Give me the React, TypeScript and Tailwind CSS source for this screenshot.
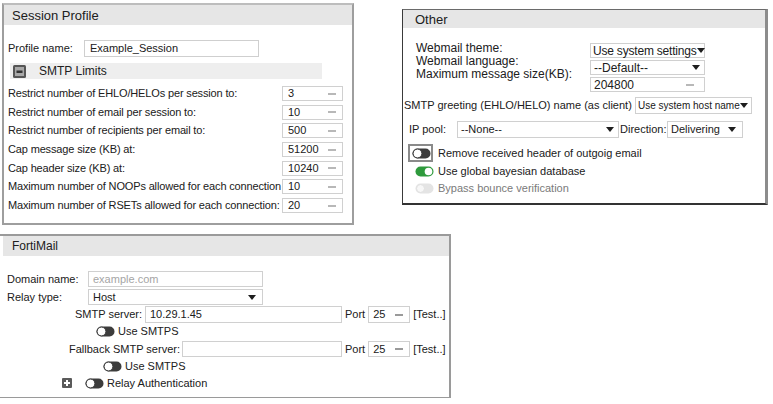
import React from "react";

const Arrow = () => (
  <svg width="8" height="5" viewBox="0 0 8 5" className="shrink-0">
    <path d="M0 0H8L4 5Z" fill="#1e1e1e" />
  </svg>
);

const Dash = () => <span className="ml-auto mr-[6px] h-[2px] w-[8px] shrink-0 bg-[#b8b8b8]" />;

const ToggleOff = () => (
  <svg width="19" height="11" viewBox="0 0 19 11" className="shrink-0">
    <rect x="0.5" y="0.5" width="18" height="10" rx="5" fill="#3c3c3c" />
    <circle cx="5.5" cy="5.5" r="4.4" fill="#fff" stroke="#3c3c3c" strokeWidth="1" />
  </svg>
);

const ToggleOn = () => (
  <svg width="19" height="11" viewBox="0 0 19 11" className="shrink-0">
    <rect x="0.5" y="0.5" width="18" height="10" rx="5" fill="#2e9a3c" />
    <circle cx="13.5" cy="5.5" r="3.8" fill="#fff" />
  </svg>
);

const ToggleFaint = () => (
  <svg width="19" height="11" viewBox="0 0 19 11" className="shrink-0">
    <rect x="0.5" y="0.5" width="18" height="10" rx="5" fill="#e4e4e4" />
    <circle cx="5.5" cy="5.5" r="4" fill="#f7f7f7" stroke="#e0e0e0" strokeWidth="1" />
  </svg>
);

const CollapseIcon = () => (
  <svg width="13" height="13" viewBox="0 0 13 13" className="shrink-0">
    <rect x="0" y="0" width="13" height="13" rx="1.5" fill="#555" />
    <rect x="2" y="2" width="9" height="9" fill="#a8a8a8" />
    <rect x="3.5" y="5.5" width="6" height="2.5" fill="#333" />
  </svg>
);

const PlusIcon = () => (
  <svg width="10" height="10" viewBox="0 0 10 10" className="shrink-0">
    <rect x="0" y="0" width="10" height="10" rx="1" fill="#5a5a5a" />
    <rect x="4" y="2" width="2" height="6" fill="#fff" />
    <rect x="2" y="4" width="6" height="2" fill="#fff" />
  </svg>
);

const limits: [string, string][] = [
  ["Restrict number of EHLO/HELOs per session to:", "3"],
  ["Restrict number of email per session to:", "10"],
  ["Restrict number of recipients per email to:", "500"],
  ["Cap message size (KB) at:", "51200"],
  ["Cap header size (KB) at:", "10240"],
  ["Maximum number of NOOPs allowed for each connection", "10"],
  ["Maximum number of RSETs allowed for each connection:", "20"],
];

function SessionProfile() {
  return (
    <div className="w-[352px] h-[222px] border-2 border-[#9e9e9e] border-t-[#bdbdbd] bg-white shrink-0">
      <div className="h-[20px] bg-[#e6e6e6] flex items-center pl-[8px] text-[13px]">Session Profile</div>
      <div className="mt-[15px] flex items-center h-[17px]">
        <div className="w-[80px] pl-[4px] whitespace-nowrap">Profile name:</div>
        <div className="h-[17px] w-[175px] border border-[#cfcfcf] flex items-center pl-[5px]">Example_Session</div>
      </div>
      <div className="mt-[6px] ml-[6px] w-[312px] h-[16px] bg-[#eeeeee] flex items-center">
        <span className="ml-[3px] flex">
          <CollapseIcon />
        </span>
        <span className="ml-[13px] text-[12px]">SMTP Limits</span>
      </div>
      <div className="mt-[7px]">
        {limits.map(([label, value]) => (
          <div key={label} className="flex items-center h-[15px] mb-[3.7px]">
            <div className="w-[278px] pl-[4px] whitespace-nowrap tracking-[-0.15px]">{label}</div>
            <div className="h-[15px] w-[61px] border border-[#d0d0d0] flex items-center pl-[5px]">
              <span>{value}</span>
              <Dash />
            </div>
          </div>
        ))}
      </div>
    </div>
  );
}

function Other() {
  return (
    <div className="ml-[48px] mt-[6px] w-[366px] h-[196px] border-l border-t border-r-[3px] border-b-2 border-l-[#3a3a3a] border-t-[#6a6a6a] border-r-[#8c8c8c] border-b-[#333] bg-white shrink-0">
      <div className="h-[18px] bg-[#e6e6e6] flex items-center pl-[12px] text-[13px]">Other</div>
      <div className="mt-[15px] flex items-start text-[12px]">
        <div className="w-[187px] pl-[13px] -mt-[1px] leading-[13px] whitespace-nowrap">
          <div>Webmail theme:</div>
          <div>Webmail language:</div>
          <div>Maximum message size(KB):</div>
        </div>
        <div className="flex flex-col gap-[2px]">
          <div className="w-[115px] h-[15px] border border-[#d0d0d0] flex items-center pl-[2px] pr-[2px] justify-between whitespace-nowrap tracking-[-0.2px]">
            <span>Use system settings</span>
            <Arrow />
          </div>
          <div className="w-[115px] h-[15px] border border-[#d0d0d0] flex items-center pl-[3px] pr-[4px] justify-between">
            <span>--Default--</span>
            <Arrow />
          </div>
          <div className="w-[115px] h-[15px] border border-[#d0d0d0] flex items-center pl-[3px]">
            <span>204800</span>
            <span className="ml-auto mr-[10px] h-[2px] w-[8px] bg-[#b8b8b8]" />
          </div>
        </div>
      </div>
      <div className="mt-[5px] flex items-center h-[17px]">
        <div className="w-[232px] pl-[1px] whitespace-nowrap">SMTP greeting (EHLO/HELO) name (as client)</div>
        <div className="w-[117px] h-[17px] border border-[#d0d0d0] flex items-center pl-[2px] pr-[3px] justify-between text-[10px] whitespace-nowrap">
          <span>Use system host name</span>
          <Arrow />
        </div>
      </div>
      <div className="mt-[7px] flex items-center h-[17px]">
        <div className="w-[54px] pl-[6px] whitespace-nowrap">IP pool:</div>
        <div className="w-[162px] h-[17px] border border-[#d0d0d0] flex items-center pl-[3px] pr-[4px] justify-between">
          <span>--None--</span>
          <Arrow />
        </div>
        <div className="ml-[1px] w-[47px] whitespace-nowrap">Direction:</div>
        <div className="w-[76px] h-[17px] border border-[#d0d0d0] flex items-center pl-[3px] pr-[6px] justify-between">
          <span>Delivering</span>
          <Arrow />
        </div>
      </div>
      <div className="mt-[6px] flex items-center h-[18px]">
        <div className="ml-[5px] w-[25px] h-[18px] border-2 border-[#8a8a8a] flex items-center pl-[2px]">
          <ToggleOff />
        </div>
        <span className="ml-[5px] whitespace-nowrap">Remove received header of outgoig email</span>
      </div>
      <div className="mt-[2px] flex items-center h-[14px]">
        <span className="ml-[12px] flex">
          <ToggleOn />
        </span>
        <span className="ml-[4px] whitespace-nowrap">Use global bayesian database</span>
      </div>
      <div className="mt-[3px] flex items-center h-[14px]">
        <span className="ml-[12px] flex">
          <ToggleFaint />
        </span>
        <span className="ml-[4px] whitespace-nowrap text-[#7a7a7a]">Bypass bounce verification</span>
      </div>
    </div>
  );
}

function FortiMail() {
  return (
    <div className="mt-[9px] w-[451px] h-[164px] border-t-2 border-r-2 border-b border-[#9a9a9a] pl-[3px] bg-white">
      <div className="h-[20px] bg-[#e6e6e6] flex items-center pl-[9px] text-[12px]">FortiMail</div>
      <div className="mt-[15px] flex items-center h-[16px]">
        <div className="w-[85px] pl-[4px] whitespace-nowrap">Domain name:</div>
        <div className="w-[175px] h-[16px] border border-[#d0d0d0] flex items-center pl-[4px] text-[#a5a5a5]">example.com</div>
      </div>
      <div className="mt-[2px] flex items-center h-[16px]">
        <div className="w-[85px] pl-[4px] whitespace-nowrap">Relay type:</div>
        <div className="w-[175px] h-[16px] border border-[#d0d0d0] flex items-center pl-[4px] pr-[6px] justify-between">
          <span>Host</span>
          <Arrow />
        </div>
      </div>
      <div className="mt-[1px] flex items-center h-[17px]">
        <div className="w-[142px] pr-[3px] text-right whitespace-nowrap">SMTP server:</div>
        <div className="w-[197px] h-[17px] border border-[#d0d0d0] flex items-center pl-[4px]">10.29.1.45</div>
        <span className="ml-[3px]">Port</span>
        <div className="ml-[3px] w-[42px] h-[17px] border border-[#d0d0d0] flex items-center pl-[4px]">
          <span>25</span>
          <span className="ml-auto mr-[6px] h-[2px] w-[8px] bg-[#9a9a9a]" />
        </div>
        <span className="ml-[3px] whitespace-nowrap">[Test..]</span>
      </div>
      <div className="mt-[1px] flex items-center h-[14px]">
        <span className="ml-[93px] flex">
          <ToggleOff />
        </span>
        <span className="ml-[3px] whitespace-nowrap">Use SMTPS</span>
      </div>
      <div className="mt-[3px] flex items-center h-[16px]">
        <div className="w-[179px] pr-[2px] text-right whitespace-nowrap">Fallback SMTP server:</div>
        <div className="w-[160px] h-[16px] border border-[#d0d0d0]" />
        <span className="ml-[3px]">Port</span>
        <div className="ml-[3px] w-[42px] h-[16px] border border-[#d0d0d0] flex items-center pl-[4px]">
          <span>25</span>
          <span className="ml-auto mr-[6px] h-[2px] w-[8px] bg-[#9a9a9a]" />
        </div>
        <span className="ml-[3px] whitespace-nowrap">[Test..]</span>
      </div>
      <div className="mt-[2px] flex items-center h-[14px]">
        <span className="ml-[100px] flex">
          <ToggleOff />
        </span>
        <span className="ml-[3px] whitespace-nowrap">Use SMTPS</span>
      </div>
      <div className="mt-[3px] flex items-center h-[14px]">
        <span className="ml-[59px] flex">
          <PlusIcon />
        </span>
        <span className="ml-[13px] flex">
          <ToggleOff />
        </span>
        <span className="ml-[3px] whitespace-nowrap">Relay Authentication</span>
      </div>
    </div>
  );
}

export default function App() {
  return (
    <div className="w-[773px] h-[404px] bg-white overflow-hidden font-['Liberation_Sans',Arial,sans-serif] text-[11px] leading-none text-[#202020]">
      <div className="flex items-start pl-[2px] pt-[3px]">
        <SessionProfile />
        <Other />
      </div>
      <FortiMail />
    </div>
  );
}
